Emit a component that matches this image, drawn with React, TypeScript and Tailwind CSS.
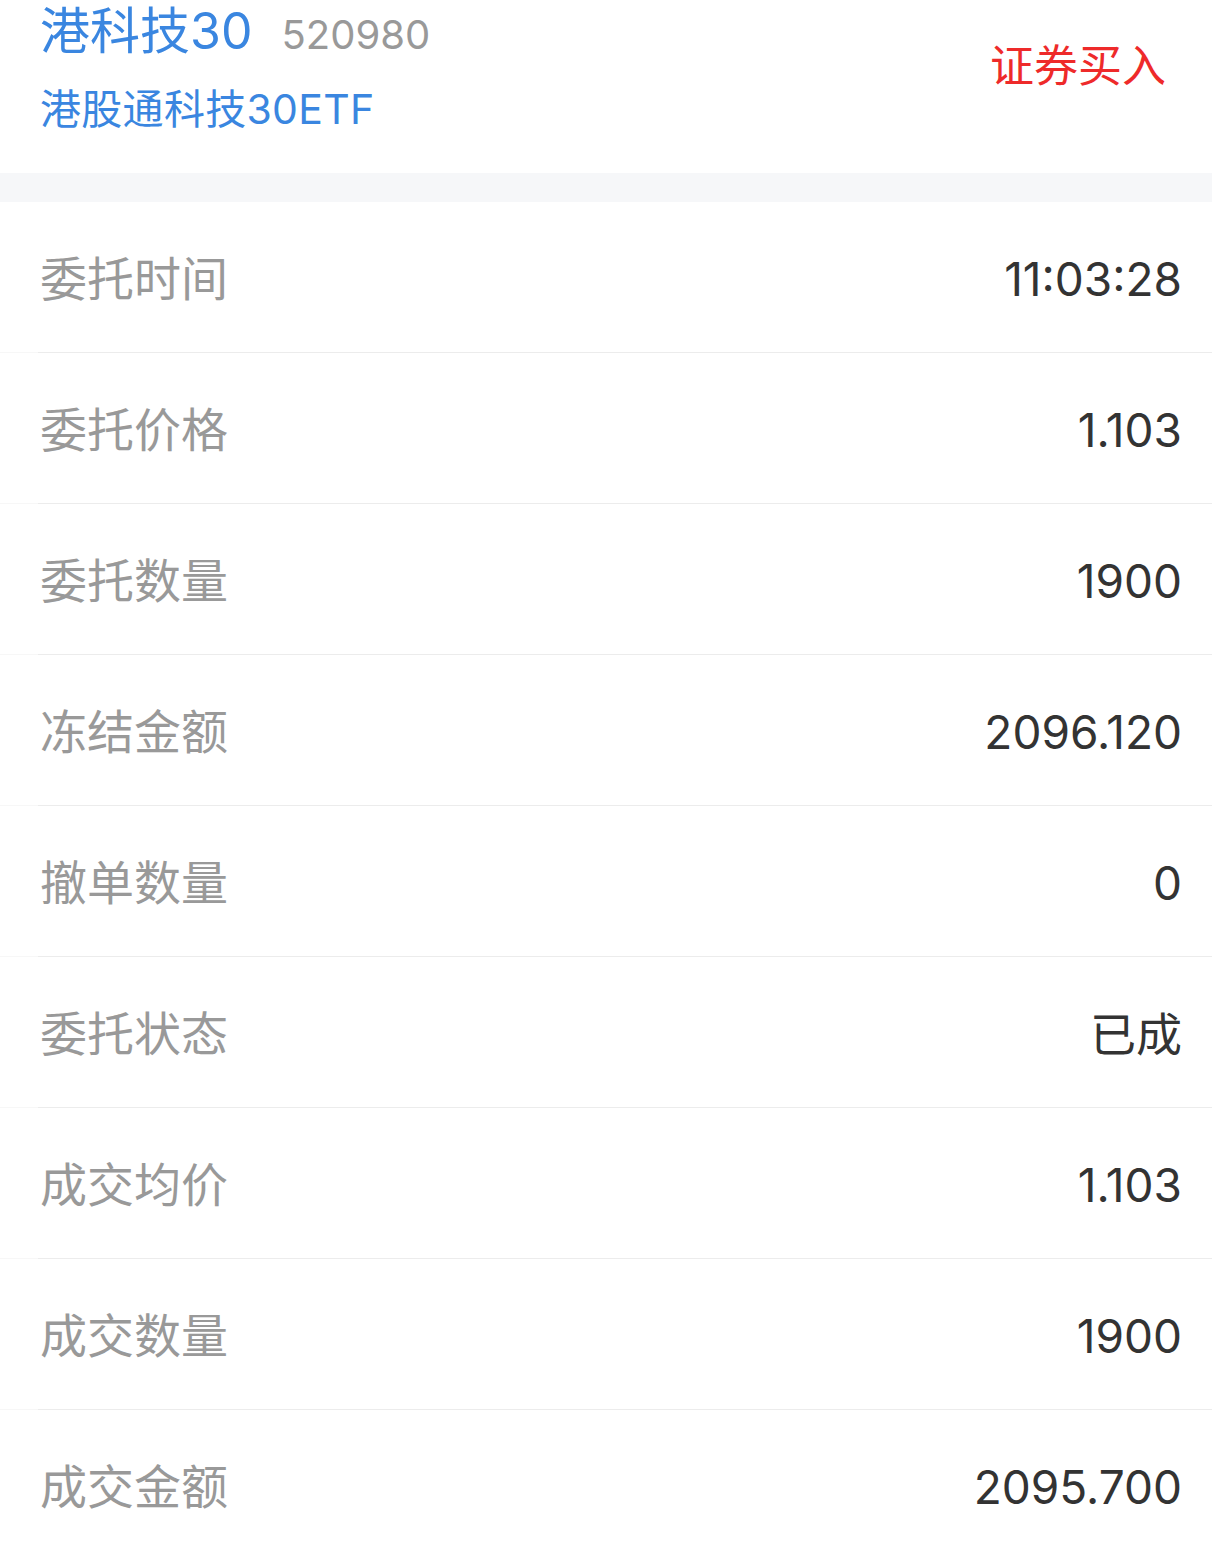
const rows: [string, string][] = [
  ['委托时间', '11:03:28'],
  ['委托价格', '1.103'],
  ['委托数量', '1900'],
  ['冻结金额', '2096.120'],
  ['撤单数量', '0'],
  ['委托状态', '已成'],
  ['成交均价', '1.103'],
  ['成交数量', '1900'],
  ['成交金额', '2095.700']
]

function Row ({ label, value }: { label: string, value: string }) {
  return (
    <div className="flex h-[151px]">
      <div className="w-[38px] border-b border-[#f7f7f7]" />
      <div className="flex flex-1 items-center justify-between border-b border-[#ececec] pl-[2px] pr-[30px] pt-[3px]">
        <span className="text-[47px] leading-[60px] text-[#999999]">{label}</span>
        <span className="text-[46px] leading-[60px] text-[#333333]">{value}</span>
      </div>
    </div>
  )
}

function App () {
  return (
    <div
      className="w-[1212px] h-[1546px] overflow-hidden bg-white"
      style={{ fontFamily: "Inter, 'Noto Sans CJK SC', sans-serif" }}
    >
      <div className="flex h-[173px] items-center justify-between pl-[40px] pr-[46px]">
        <div className="flex flex-col self-start">
          <div className="flex items-baseline gap-[29px] leading-[62px]">
            <span className="text-[50px] text-[#3a86e0]">港科技30</span>
            <span className="text-[40px] text-[#999999]">520980</span>
          </div>
          <div className="mt-[18px] text-[41px] leading-[50px] tracking-[0.3px] text-[#3a86e0]">港股通科技30ETF</div>
        </div>
        <div className="mb-[42px] text-[44px] text-[#ee2a2a]">证券买入</div>
      </div>
      <div className="h-[29px] bg-[#f6f7f9]" />
      {rows.map(([label, value]) => (
        <Row key={label} label={label} value={value} />
      ))}
    </div>
  )
}

export default App
